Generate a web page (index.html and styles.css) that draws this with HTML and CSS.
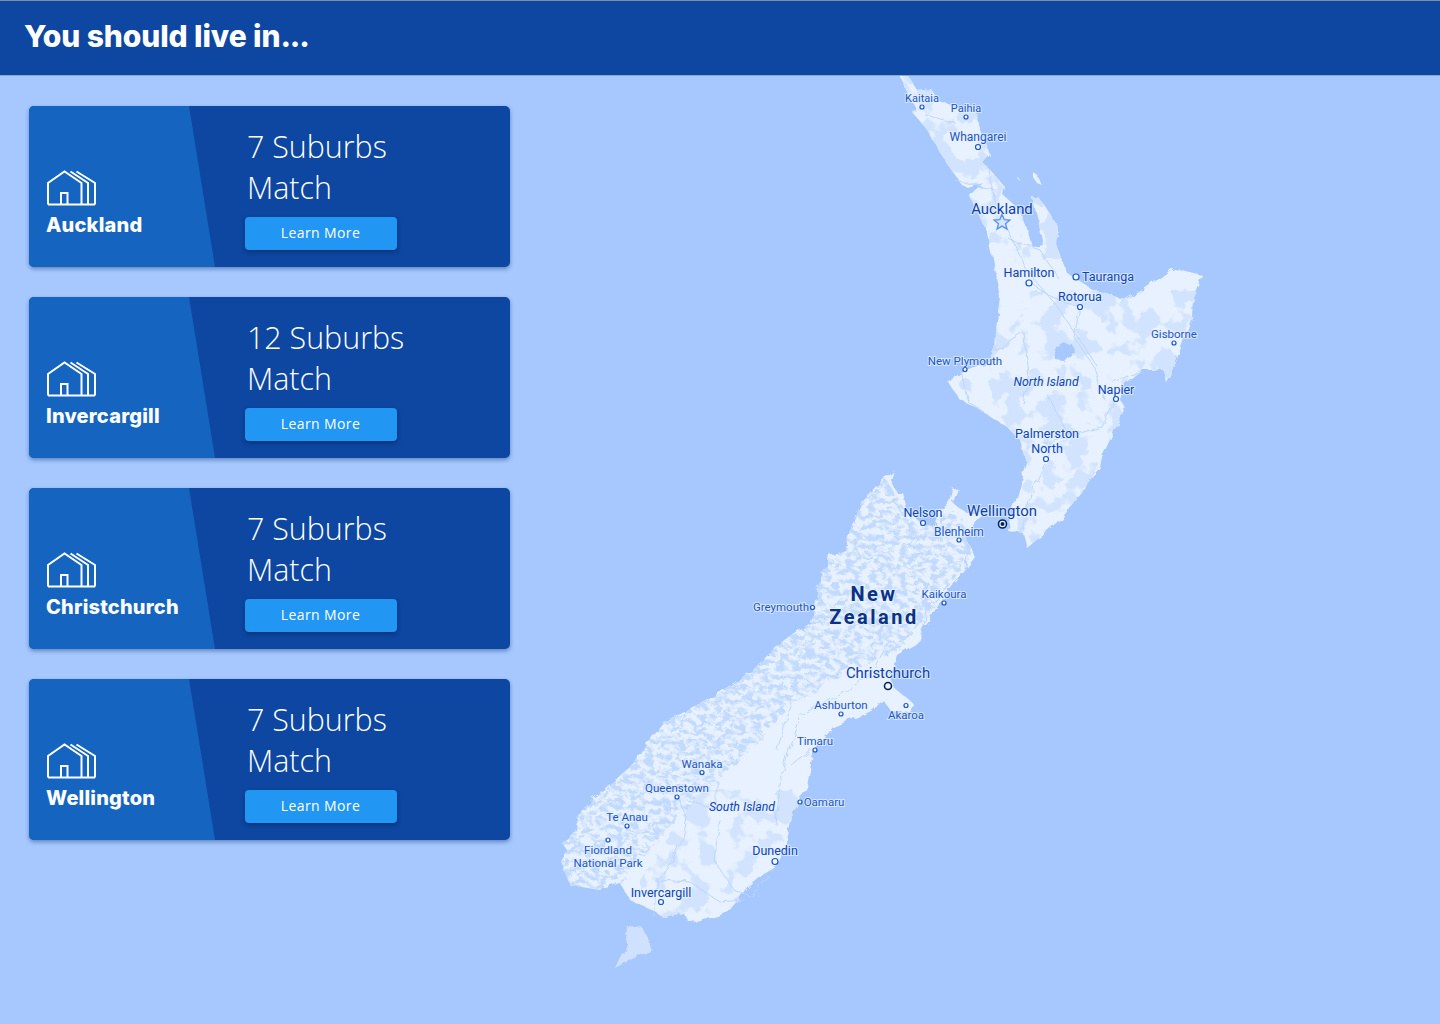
FILE: index.html
```html
<!DOCTYPE html>
<html lang="en">

<head>
    <meta charset="UTF-8">
    <meta name="viewport" content="width=device-width, initial-scale=1.0">
    <title>You should live in...</title>
    <link rel="stylesheet" href="styles.css">
</head>

<body>
    <header class="top-bar">
        <h1>You should live in<span class="tight-dots">...</span></h1>
    </header>

    <main class="content">
        <!-- city results -->
        <section class="city-list">
            <article class="city-card">
                <div class="city-side">
                    <svg class="house-icon" viewBox="0 0 50 36"><path d="M1 34.5V13L17.5 1.5 34.5 13V34.5M23.5 1.5 41 13V34.5M29.5 1.5 48 13V34.5M1 34.5H48M14 34.5V23H20.5V34.5"/></svg>
                    <h2>Auckland</h2>
                </div>
                <div class="city-info">
                    <p>7 Suburbs<br>Match</p>
                    <button>Learn More</button>
                </div>
            </article>
            <article class="city-card">
                <div class="city-side">
                    <svg class="house-icon" viewBox="0 0 50 36"><path d="M1 34.5V13L17.5 1.5 34.5 13V34.5M23.5 1.5 41 13V34.5M29.5 1.5 48 13V34.5M1 34.5H48M14 34.5V23H20.5V34.5"/></svg>
                    <h2>Invercargill</h2>
                </div>
                <div class="city-info">
                    <p>12 Suburbs<br>Match</p>
                    <button>Learn More</button>
                </div>
            </article>
            <article class="city-card">
                <div class="city-side">
                    <svg class="house-icon" viewBox="0 0 50 36"><path d="M1 34.5V13L17.5 1.5 34.5 13V34.5M23.5 1.5 41 13V34.5M29.5 1.5 48 13V34.5M1 34.5H48M14 34.5V23H20.5V34.5"/></svg>
                    <h2>Christchurch</h2>
                </div>
                <div class="city-info">
                    <p>7 Suburbs<br>Match</p>
                    <button>Learn More</button>
                </div>
            </article>
            <article class="city-card">
                <div class="city-side">
                    <svg class="house-icon" viewBox="0 0 50 36"><path d="M1 34.5V13L17.5 1.5 34.5 13V34.5M23.5 1.5 41 13V34.5M29.5 1.5 48 13V34.5M1 34.5H48M14 34.5V23H20.5V34.5"/></svg>
                    <h2>Wellington</h2>
                </div>
                <div class="city-info">
                    <p>7 Suburbs<br>Match</p>
                    <button>Learn More</button>
                </div>
            </article>
        </section>

        <!-- map, drawn in page coordinates -->
        <svg class="nz-map" viewBox="540 76 900 948">
            <defs>
                <path id="north" d="M900 76L908 76 917 90 930 88 938 100 957 108 977 113 980 130 990 155 983 163 993 173 1005 187 1003 195 1020 210 1030 237 1033 247 1043 245 1038 220 1032 197 1038 197 1050 213 1058 227 1057 247 1067 273 1093 290 1127 300 1153 283 1173 268 1202 275 1193 297 1192 317 1173 370 1172 374 1167 383 1163 370 1143 370 1123 387 1120 400 1125 408 1113 433 1102 457 1100 467 1080 493 1063 517 1040 537 1027 548 1023 533 1007 530 1012 513 1020 487 1027 463 1020 440 1007 427 980 410 960 400 949 383 955 375 965 370 990 362 995 350 997 320 1000 297 987 233 970 195 975 190 983 183 968 188 962 185 947 163 925 127 912 112 915 107Z"/>
                <path id="south" d="M893 470L890 478 897 493 903 493 907 510 923 525 933 527 940 510 950 503 953 490 958 488 953 503 967 513 983 513 973 522 967 540 975 557 960 577 947 593 933 613 923 627 917 643 897 655 890 677 893 687 913 703 910 713 890 710 883 700 873 710 867 713 833 727 813 753 807 787 793 813 787 840 780 863 763 873 747 887 738 900 727 913 697 922 687 920 683 913 663 917 653 910 630 900 620 883 600 890 570 885 560 860 567 850 562 843 573 833 583 807 603 790 630 767 647 743 667 720 700 705 720 692 753 670 773 650 810 623 820 580 827 565 827 557 845 550 862 500Z"/>
                <path id="stewart" d="M628 927L640 925 650 940 652 950 630 960 615 968 622 953 627 940Z"/>
                <clipPath id="south-clip"><use href="#south"/></clipPath>
                <clipPath id="north-clip"><use href="#north"/></clipPath>
                <filter id="coast" filterUnits="userSpaceOnUse" x="540" y="76" width="900" height="948">
                    <feTurbulence type="fractalNoise" baseFrequency="0.09" numOctaves="3" seed="3"/>
                    <feDisplacementMap in="SourceGraphic" scale="7"/>
                </filter>
                <filter id="ridges" x="0" y="0" width="100%" height="100%" color-interpolation-filters="sRGB">
                    <feTurbulence type="fractalNoise" baseFrequency="0.13 0.2" numOctaves="4" seed="7"/>
                    <feColorMatrix values="0 0 0 0 0.76  0 0 0 0 0.855  0 0 0 0 1  0 0 0 5 -2.1"/>
                    <feComposite in2="SourceGraphic" operator="in"/>
                </filter>
                <filter id="forest" x="0" y="0" width="100%" height="100%" color-interpolation-filters="sRGB">
                    <feTurbulence type="fractalNoise" baseFrequency="0.045" numOctaves="3" seed="11"/>
                    <feColorMatrix values="0 0 0 0 0.82  0 0 0 0 0.89  0 0 0 0 1  0 0 0 14 -7"/>
                    <feComposite in2="SourceGraphic" operator="in"/>
                </filter>
            </defs>

            <g filter="url(#coast)">
                <use class="land" href="#north"/>
                <use class="land" href="#south"/>
                <use class="land stewart" href="#stewart"/>
                <path class="land" d="M1033 172l4 3 5 10-5-2-4-6ZM1018 178l2 1-1 2Z"/>

                <!-- north island forest and hills -->
                <g clip-path="url(#north-clip)">
                    <path class="patch" filter="url(#forest)" d="M900 76H1060V260H900ZM990 290H1210V400H1130L1060 540 1020 550 1010 430 990 400Z"/>
                    <path class="water" d="M1054 348l8-5 10 1 1 7-9 10-9-1Z"/>
                    <circle class="patch" cx="965" cy="384" r="6"/>
                </g>
                <path class="road" d="M925 115l30 8M955 180l40 10M987 165l8 36 18 40 14 30 30 35 40 60M1010 240l30 10 20 30M1030 283l22 14 28 10M1080 307l-6 30 20 30 10 32M995 350l28-18 6 40-6 32M960 370l8 32 16 10M1047 395l22 40-22 24-16 34-10 40M1116 399l-14 28-60 16M1143 370l-30 12"/>

                <!-- south island terrain -->
                <g clip-path="url(#south-clip)">
                    <path class="patch-terrain" filter="url(#ridges)" d="M880 470L920 530 955 510 980 540 940 600 900 650 850 670 790 705 730 770 680 815 650 850 620 885 550 900 550 840 600 770 660 710 760 660 810 610 830 550Z"/>
                    <path class="patch" filter="url(#forest)" d="M700 790H800V920H640V880Z"/>
                </g>
                <path class="road" d="M893 500l14 20M923 525l-12 18-10 5M968 540l-2 30-40 40-6 30M890 640l-20 35-30 20-40 20-10 30-10 40-4 40M812 750l-20 16M793 700l-16 50M687 800l30 10 0-30M678 797l8 20-4 20-10 24-14 18-5 36M720 820l-6 40 20 30 16 6 20-20M660 880l30 2 30 20 24-2"/>
            </g>

            <g class="labels">
                <text x="922" y="102">Kaitaia</text>
                <text x="966" y="112">Paihia</text>
                <text class="md" x="978" y="141">Whangarei</text>
                <text class="xl" x="1002" y="213.5">Auckland</text>
                <text class="lg" x="1029" y="277">Hamilton</text>
                <text class="lg" x="1108" y="281">Tauranga</text>
                <text class="lg" x="1080" y="301">Rotorua</text>
                <text class="sm" x="1174" y="338">Gisborne</text>
                <text class="sm" x="965" y="365">New Plymouth</text>
                <text class="island" x="1046" y="386">North Island</text>
                <text class="lg" x="1116" y="394">Napier</text>
                <text class="lg" x="1047" y="438">Palmerston</text>
                <text class="lg" x="1047" y="453">North</text>
                <text class="lg" x="923" y="517">Nelson</text>
                <text class="xl" x="1002" y="516">Wellington</text>
                <text class="md" x="959" y="536">Blenheim</text>
                <text class="sm" x="944" y="598">Kaikoura</text>
                <text class="sm" x="781" y="611">Greymouth</text>
                <text class="country" x="874" y="601">New</text>
                <text class="country" x="874" y="624">Zealand</text>
                <text class="xl" x="888" y="678">Christchurch</text>
                <text class="sm" x="841" y="709">Ashburton</text>
                <text class="sm" x="906" y="719">Akaroa</text>
                <text class="sm" x="815" y="745">Timaru</text>
                <text class="sm" x="702" y="768">Wanaka</text>
                <text class="sm" x="677" y="792">Queenstown</text>
                <text class="island" x="742" y="811">South Island</text>
                <text class="sm" x="824" y="806">Oamaru</text>
                <text class="sm" x="627" y="821">Te Anau</text>
                <text class="sm" x="608" y="854">Fiordland</text>
                <text class="sm" x="608" y="867">National Park</text>
                <text class="lg" x="775" y="855">Dunedin</text>
                <text class="lg" x="661" y="897">Invercargill</text>
            </g>

            <g class="dots">
                <circle cx="922" cy="107" r="2"/>
                <circle cx="966" cy="117" r="2"/>
                <circle cx="978" cy="147" r="2.5"/>
                <circle cx="1029" cy="283" r="3"/>
                <circle cx="1076" cy="277" r="3"/>
                <circle cx="1080" cy="307" r="2.5"/>
                <circle cx="1174" cy="343" r="2"/>
                <circle cx="965" cy="369.5" r="2"/>
                <circle cx="1116" cy="399" r="2.5"/>
                <circle cx="1046" cy="459" r="2.5"/>
                <circle cx="923" cy="523" r="2.5"/>
                <circle cx="959" cy="540" r="2"/>
                <circle cx="944" cy="603" r="2"/>
                <circle cx="812.5" cy="607.5" r="2"/>
                <circle cx="841" cy="714" r="2"/>
                <circle cx="906" cy="705.5" r="2"/>
                <circle cx="815" cy="750" r="2"/>
                <circle cx="702" cy="772.5" r="2"/>
                <circle cx="677" cy="797" r="2"/>
                <circle cx="800" cy="802" r="2"/>
                <circle cx="627" cy="826" r="2"/>
                <circle cx="608" cy="840" r="2"/>
                <circle cx="775" cy="861.5" r="3"/>
                <circle cx="661" cy="902" r="2.5"/>
            </g>

            <circle class="dot-dark" cx="888" cy="686" r="3.5"/>
            <circle class="dot-dark" cx="1002.5" cy="524" r="4"/>
            <circle class="dot-core" cx="1002.5" cy="524" r="2"/>
            <path class="capital" d="M1002 214.5l2.2 5.2 5.6.4-4.3 3.6 1.4 5.4-4.9-3-4.9 3 1.4-5.4-4.3-3.6 5.6-.4Z"/>
        </svg>
    </main>
</body>

</html>
```

FILE: styles.css
```css
/* page */
body {
    margin: 0;
    height: 100vh;
    overflow: hidden;
    background: #a6c8ff;
    font-family: 'Open Sans', sans-serif;
}

.top-bar {
    box-sizing: border-box;
    height: 76px;
    display: flex;
    align-items: center;
    padding: 0 0 5px 24px;
    background: #0d47a1;
    border-top: 1px solid #7f8ea8;
    border-bottom: 1px solid #8fa6c9;
}

.top-bar h1 {
    margin: 0;
    color: #fff;
    font-family: 'Inter', sans-serif;
    font-size: 30px;
    font-weight: 800;
    letter-spacing: -0.1px;
}

.tight-dots {
    letter-spacing: -1.2px;
}

.content {
    display: flex;
    height: 948px;
}

/* city cards */
.city-list {
    width: 481px;
    flex-shrink: 0;
    display: flex;
    flex-direction: column;
    gap: 30px;
    padding: 30px 0 0 29px;
}

.city-card {
    display: flex;
    height: 161px;
    border-radius: 5px;
    overflow: hidden;
    background: #0d47a1;
    box-shadow: 0 2px 4px rgba(13, 50, 110, 0.45);
}

.city-side {
    box-sizing: border-box;
    width: 186px;
    display: flex;
    flex-direction: column;
    justify-content: flex-end;
    padding: 0 0 30px 17px;
    background: #1565c0;
    clip-path: polygon(0 0, 160px 0, 186px 100%, 0 100%);
}

.house-icon {
    width: 50px;
    height: 36px;
    margin-left: 1px;
    fill: none;
    stroke: #fff;
    stroke-width: 2;
}

.city-side h2 {
    margin: 7px 0 0;
    color: #fff;
    font-family: 'Inter', sans-serif;
    font-size: 20px;
    font-weight: 800;
    letter-spacing: 0.2px;
    line-height: 24px;
}

.city-info {
    padding: 20px 0 0 30px;
}

.city-info p {
    margin: 0 0 9px 2px;
    color: #fff;
    font-size: 30.4px;
    font-weight: 340;
    line-height: 41px;
}

.city-info button {
    display: block;
    width: 152px;
    height: 33px;
    padding: 0 1px 2px 0;
    border: none;
    border-radius: 4px;
    background: #2196f3;
    color: #fff;
    font-family: 'Open Sans', sans-serif;
    font-size: 14px;
    letter-spacing: 0.4px;
    box-shadow: 0 2px 4px rgba(5, 30, 80, 0.5);
}

/* map */
.nz-map {
    width: 900px;
    height: 948px;
    margin-left: 30px;
    flex-shrink: 0;
}

.land {
    fill: #e8f1ff;
}

.stewart {
    fill: #cfe1ff;
}

.patch {
    fill: #d0e2ff;
}

.water {
    fill: #a6c8ff;
}

.patch-terrain {
    fill: #fff;
}

.road {
    fill: none;
    stroke: #bcd6ff;
    stroke-width: 1;
}

.labels text {
    fill: #1a56c4;
    font-family: 'Roboto', sans-serif;
    font-size: 11px;
    text-anchor: middle;
    paint-order: stroke;
    stroke: rgba(232, 241, 255, 0.75);
    stroke-width: 2px;
}

.labels .sm {
    font-size: 11.5px;
}

.labels .md {
    font-size: 12px;
}

.labels .lg {
    font-size: 12.5px;
    fill: #0b45b5;
}

.labels .xl {
    font-size: 14.9px;
    fill: #0b3fa8;
}

.labels .island {
    font-size: 12.3px;
    font-style: italic;
    fill: #0b45b5;
}

.labels .country {
    font-size: 20px;
    font-weight: 700;
    letter-spacing: 2.5px;
    fill: #0a3285;
}

.dots circle {
    fill: #f2f7ff;
    stroke: #1a56c4;
    stroke-width: 1.2;
}

.dot-dark {
    fill: #f2f7ff;
    stroke: #04245e;
    stroke-width: 1.6;
}

.dot-core {
    fill: #04245e;
}

.capital {
    fill: #d8e7ff;
    stroke: #5b93ee;
    stroke-width: 1.4;
}
```
